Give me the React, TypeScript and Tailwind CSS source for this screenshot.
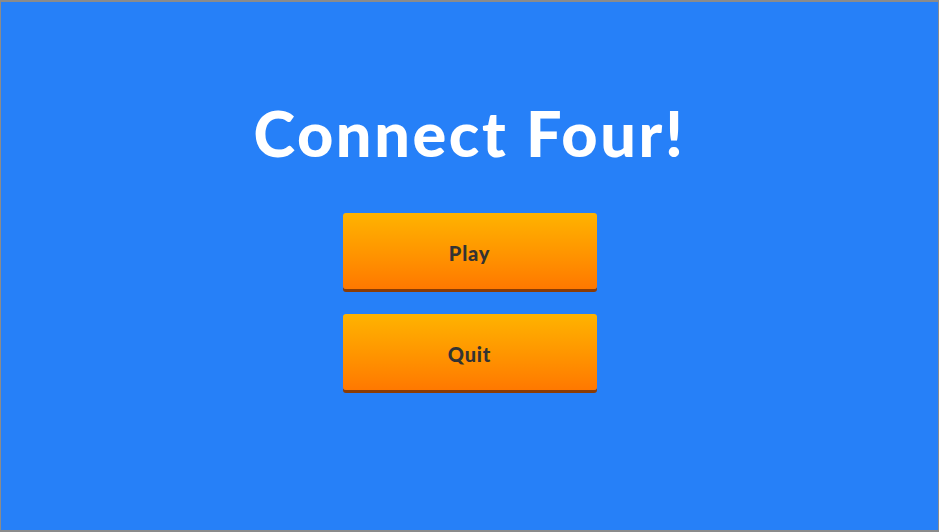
import React from "react";

function MenuButton({ label }: { label: string }) {
  return (
    <button className="w-[254px] h-[76px] rounded-[3px] bg-gradient-to-b from-[#ffb300] to-[#ff7800] shadow-[0_3px_0_#8a3c06] flex items-center justify-center pt-[4px] text-[#333333] text-[20px] font-black tracking-[0.8px] [font-family:'Lato',sans-serif]">
      {label}
    </button>
  );
}

export default function App() {
  return (
    <div className="w-[939px] h-[532px] bg-[#2680f8] border-t-2 border-b-2 border-l border-r border-[#8b8b8b] flex flex-col items-center">
      <h1 className="mt-[99px] text-white text-[63px] leading-none font-black [font-family:'Lato',sans-serif] tracking-[2.6px]">
        Connect Four!
      </h1>
      <div className="mt-[49px] flex flex-col gap-[25px]">
        <MenuButton label="Play" />
        <MenuButton label="Quit" />
      </div>
    </div>
  );
}
